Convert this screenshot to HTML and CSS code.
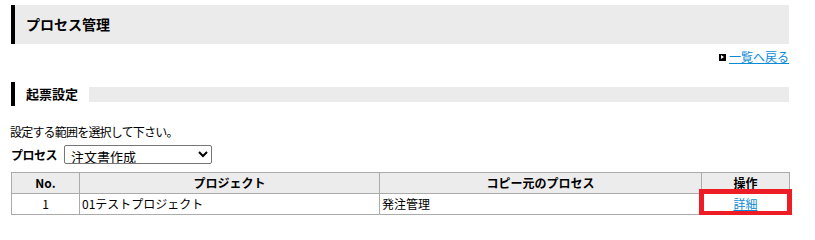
FILE: index.html
```html
<!DOCTYPE html>
<html lang="ja">
<head>
<meta charset="utf-8">
<title>プロセス管理</title>
<link rel="stylesheet" href="styles.css">
</head>
<body>
<div class="page">
  <h1 class="title">プロセス管理</h1>
  <div class="back-row">
    <a class="back" href="#"><span class="back-icon"></span><span class="back-text">一覧へ戻る</span></a>
  </div>
  <div class="section">
    <h2 class="section-title">起票設定</h2>
    <div class="section-bar"></div>
  </div>
  <p class="note">設定する範囲を選択して下さい。</p>
  <div class="process-row">
    <label class="process-label" for="proc">プロセス</label>
    <select id="proc" class="process-select">
      <option>注文書作成</option>
    </select>
  </div>
  <table class="grid">
    <thead>
      <tr>
        <th class="c-no">No.</th>
        <th class="c-proj">プロジェクト</th>
        <th class="c-copy">コピー元のプロセス</th>
        <th class="c-op">操作</th>
      </tr>
    </thead>
    <tbody>
      <tr>
        <td class="center">1</td>
        <td>01テストプロジェクト</td>
        <td>発注管理</td>
        <td class="center op"><a href="#" class="detail">詳細</a><span class="highlight"></span></td>
      </tr>
    </tbody>
  </table>
</div>
</body>
</html>
```

FILE: styles.css
```css
html, body {
  margin: 0;
  padding: 0;
  background: #fff;
}
body {
  font-family: "Noto Sans CJK JP", "DejaVu Sans", sans-serif;
  font-size: 12px;
  color: #000;
}
.page {
  width: 778px;
  margin-left: 11px;
  padding-top: 5px;
}
.title {
  margin: 0;
  height: 39px;
  line-height: 39px;
  background: #ebebeb;
  border-left: 4px solid #000;
  padding-left: 11px;
  font-size: 14px;
  font-weight: bold;
}
.back-row {
  display: flex;
  justify-content: flex-end;
  margin-top: 5px;
  height: 16px;
}
.back {
  display: flex;
  align-items: center;
  gap: 3px;
  color: #0b8ad6;
  font-size: 12px;
  line-height: 16px;
}
.back-icon {
  width: 7px;
  height: 7px;
  background: #000;
  position: relative;
}
.back-icon::after {
  content: "";
  position: absolute;
  left: 2px;
  top: 1px;
  border-left: 3px solid #fff;
  border-top: 2.5px solid transparent;
  border-bottom: 2.5px solid transparent;
}
.back-text {
  text-decoration: underline;
}
.section {
  display: flex;
  align-items: center;
  margin-top: 17px;
  height: 24px;
  border-left: 4px solid #000;
}
.section-title {
  margin: 0;
  padding-left: 11px;
  font-size: 13px;
  font-weight: bold;
  line-height: 24px;
}
.section-bar {
  flex: 1;
  height: 15px;
  margin-left: 11px;
  background: #ebebeb;
}
.note {
  margin: 19px 0 0 -1px;
  line-height: 14px;
  letter-spacing: -0.8px;
}
.process-row {
  display: flex;
  align-items: center;
  gap: 7px;
  margin-top: 6px;
  height: 19px;
}
.process-label {
  font-weight: bold;
  letter-spacing: -0.5px;
}
.process-select {
  width: 148px;
  height: 19px;
  font-family: "Noto Sans CJK JP", sans-serif;
  font-size: 13px;
  padding: 0 2px;
  border: 1px solid #767676;
  border-radius: 2px;
  background: #fff;
  color: #000;
}
.grid {
  width: 778px;
  margin-top: 8px;
  border-collapse: collapse;
  table-layout: fixed;
}
.grid th, .grid td {
  box-sizing: border-box;
  border: 1px solid #ababab;
  height: 21px;
  padding: 0 2px;
  line-height: 18px;
  font-size: 12px;
  white-space: nowrap;
}
.grid th {
  background: #ececec;
  font-weight: bold;
  text-align: center;
}
.c-no { width: 68px; }
.c-proj { width: 300px; }
.c-copy { width: 322px; }
.c-op { width: 88px; }
.center { text-align: center; }
.op { position: relative; }
.detail {
  color: #0b8ad6;
  text-decoration: underline;
}
.highlight {
  position: absolute;
  left: -3px;
  right: -3px;
  top: -5px;
  bottom: -2px;
  border: 5px solid #ee1c25;
  pointer-events: none;
}
```
